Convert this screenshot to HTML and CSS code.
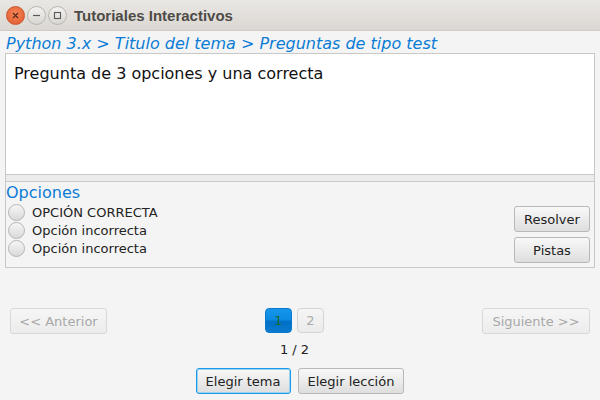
FILE: index.html
```html
<!DOCTYPE html>
<html>
<head>
<meta charset="utf-8">
<link rel="stylesheet" href="styles.css">
</head>
<body>
<div class="window">
  <div class="titlebar">
    <div class="controls">
      <span class="ctl close"><svg width="17" height="17" viewBox="0 0 17 17"><path d="M6 6 L11 11 M11 6 L6 11" stroke="#5a2a1a" stroke-width="1.3"/></svg></span>
      <span class="ctl"><svg width="17" height="17" viewBox="0 0 17 17"><path d="M5 8.5 H12" stroke="#5a5a5a" stroke-width="1.2"/></svg></span>
      <span class="ctl"><svg width="17" height="17" viewBox="0 0 17 17"><rect x="5.5" y="5.5" width="6" height="6" fill="none" stroke="#5a5a5a" stroke-width="1.1"/></svg></span>
    </div>
    <div class="title">Tutoriales Interactivos</div>
  </div>
  <div class="content">
    <div class="crumb">Python 3.x &gt; Titulo del tema &gt; Preguntas de tipo test</div>
    <div class="split">
      <div class="question">Pregunta de 3 opciones y una correcta</div>
      <div class="divider"></div>
      <div class="options">
        <div class="opts-left">
          <div class="opts-title">Opciones</div>
          <label class="radio"><span class="dot"></span>OPCIÓN CORRECTA</label>
          <label class="radio"><span class="dot"></span>Opción incorrecta</label>
          <label class="radio"><span class="dot"></span>Opción incorrecta</label>
        </div>
        <div class="opts-right">
          <button class="btn side">Resolver</button>
          <button class="btn side">Pistas</button>
        </div>
      </div>
    </div>
    <div class="pager">
      <button class="btn disabled nav prev">&lt;&lt; Anterior</button>
      <div class="pages">
        <div class="pagebtns">
          <span class="page current">1</span>
          <span class="page">2</span>
        </div>
        <div class="count">1 / 2</div>
      </div>
      <button class="btn disabled nav next">Siguiente &gt;&gt;</button>
    </div>
    <div class="bottom">
      <button class="btn focused">Elegir tema</button>
      <button class="btn">Elegir lección</button>
    </div>
  </div>
</div>
</body>
</html>
```
FILE: styles.css
```css
html, body { margin: 0; padding: 0; }
body { width: 600px; height: 400px; overflow: hidden; background: #f4f4f4; font-family: "DejaVu Sans", sans-serif; }
.window { width: 600px; height: 400px; display: flex; flex-direction: column; }
.titlebar { height: 31px; background: linear-gradient(#e9e7e3, #dbd8d3); display: flex; align-items: center; border-bottom: 1px solid #cfccc6; box-sizing: border-box; }
.controls { display: flex; gap: 2px; margin-left: 6px; }
.ctl { width: 17px; height: 17px; border-radius: 50%; background: linear-gradient(#f3f2f0, #d8d6d2); border: 1px solid #b9b6b0; display: flex; align-items: center; justify-content: center; }
.ctl svg { display: block; }
.ctl.close { background: radial-gradient(circle at 50% 40%, #f5875a, #e0562a); border-color: #c9552e; }
.title { margin-left: 7px; font-family: "Liberation Sans", sans-serif; font-weight: bold; font-size: 15px; color: #4d4b47; }
.content { flex: 1; display: flex; flex-direction: column; }
.crumb { font-style: italic; color: #0b7cd6; font-size: 16px; padding: 3px 0 0 6px; height: 19px; line-height: 19px; }
.split { margin: 0 5px; border: 1px solid #c8c8c8; height: 213px; display: flex; flex-direction: column; }
.question { background: #fff; height: 120px; padding: 10px 8px 0; box-sizing: border-box; font-size: 16px; color: #111; line-height: 20px; }
.divider { height: 6px; border-top: 1px solid #c8c8c8; border-bottom: 1px solid #c8c8c8; background: #ececec; }
.options { flex: 1; display: flex; justify-content: space-between; }
.opts-left { display: flex; flex-direction: column; }
.opts-title { color: #0b7cd6; font-size: 16px; line-height: 20px; margin-top: 1px; }
.radio { display: flex; align-items: center; font-size: 13px; color: #222; height: 18px; }
.dot { width: 15px; height: 15px; border-radius: 50%; border: 1px solid #b5b5b5; background: linear-gradient(#f6f6f6, #d9d9d9); margin: 0 7px 0 2px; }
.opts-right { display: flex; flex-direction: column; gap: 5px; padding: 24px 4px 0 0; }
.btn { font-family: "DejaVu Sans", sans-serif; font-size: 13px; color: #222; border: 1px solid #b8b8b8; border-radius: 3px; background: linear-gradient(#f8f8f8, #dedede); height: 26px; padding: 0 9px; white-space: nowrap; }
.btn.side { width: 76px; }
.btn.disabled { color: #a8a8a8; border-color: #d8d8d8; background: linear-gradient(#f6f6f6, #ececec); }
.btn.focused { border: 1px solid #1a9ae6; box-shadow: inset 0 0 0 1px #9dd2f2; }
.pager { display: flex; justify-content: space-between; padding: 40px 10px 0 10px; }
.nav { padding: 0; }
.prev { width: 97px; }
.next { width: 108px; }
.pages { display: flex; flex-direction: column; align-items: center; }
.pagebtns { display: flex; gap: 5px; }
.page { width: 27px; height: 25px; box-sizing: border-box; border-radius: 4px; border: 1px solid #d4d4d4; background: linear-gradient(#f5f5f5, #ebebeb); color: #aaa; display: flex; align-items: center; justify-content: center; font-size: 13px; }
.page.current { background: linear-gradient(#1596ea 0%, #0b8be4 45%, #006fc6 55%, #0a7ad0 100%); border-color: #0a78cc; color: #1a6a2a; }
.count { font-size: 13px; color: #222; margin-top: 9px; }
.bottom { display: flex; justify-content: center; gap: 7px; margin-top: 11px; }
```
